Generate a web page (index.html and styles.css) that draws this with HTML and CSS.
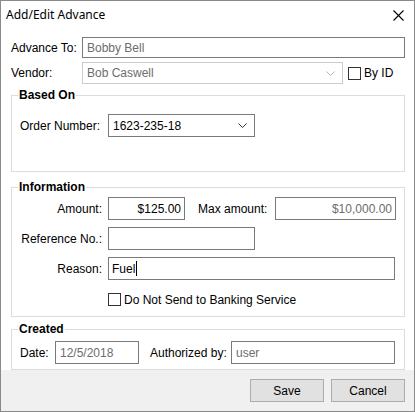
FILE: index.html
```html
<!DOCTYPE html>
<html>
<head>
<meta charset="utf-8">
<link rel="stylesheet" href="styles.css">
</head>
<body>
<div class="window">
  <div class="titlebar">
    <span class="title">Add/Edit Advance</span>
    <svg class="close" width="11" height="11" viewBox="0 0 11 11"><path d="M0.5 0.5 L10.5 10.5 M10.5 0.5 L0.5 10.5" stroke="#000" stroke-width="1.1" fill="none"/></svg>
  </div>
  <div class="content">
    <div class="row r-advance">
      <span class="lbl w71">Advance To:</span>
      <div class="box tb readonly grow">Bobby Bell</div>
    </div>
    <div class="row r-vendor">
      <span class="lbl w71">Vendor:</span>
      <div class="box combo disabled w-vendor">
        <span>Bob Caswell</span>
        <svg class="chev" width="9" height="5" viewBox="0 0 9 5"><path d="M0.5 0.5 L4.5 4.5 L8.5 0.5" stroke="#b5b5b5" fill="none"/></svg>
      </div>
      <span class="chk"></span><span class="chk-lbl">By ID</span>
    </div>

    <fieldset class="group g-based">
      <legend>Based On</legend>
      <div class="row r-order">
        <span class="lbl lcol">Order Number:</span>
        <div class="box combo w-order">
          <span>1623-235-18</span>
          <svg class="chev" width="9" height="5" viewBox="0 0 9 5"><path d="M0.5 0.5 L4.5 4.5 L8.5 0.5" stroke="#333" fill="none"/></svg>
        </div>
      </div>
    </fieldset>

    <fieldset class="group g-info">
      <legend>Information</legend>
      <div class="row r-amount">
        <span class="lbl lcol right">Amount:</span>
        <div class="box tb num w-amount">$125.00</div>
        <span class="lbl maxlbl">Max amount:</span>
        <div class="box tb num readonly w-max">$10,000.00</div>
      </div>
      <div class="row r-ref">
        <span class="lbl lcol right">Reference No.:</span>
        <div class="box tb w-ref"></div>
      </div>
      <div class="row r-reason">
        <span class="lbl lcol right">Reason:</span>
        <div class="box tb w-reason">Fuel<span class="caret"></span></div>
      </div>
      <div class="row r-bank">
        <span class="lcol"></span>
        <span class="chk"></span><span class="chk-lbl">Do Not Send to Banking Service</span>
      </div>
    </fieldset>

    <fieldset class="group g-created">
      <legend>Created</legend>
      <div class="row r-date">
        <span class="lbl w-datelbl">Date:</span>
        <div class="box tb readonly w-date">12/5/2018</div>
        <span class="lbl authlbl">Authorized by:</span>
        <div class="box tb readonly w-auth">user</div>
      </div>
    </fieldset>
  </div>
  <div class="footer">
    <button class="btn">Save</button>
    <button class="btn">Cancel</button>
  </div>
</div>
</body>
</html>
```

FILE: styles.css
```css
* { box-sizing: border-box; }
html, body { margin: 0; padding: 0; background: #fff; }
body {
  font-family: "Liberation Sans", Arial, sans-serif;
  font-size: 12px;
  color: #000;
}
.window {
  width: 415px;
  height: 412px;
  border: 1px solid #8a8a8a;
  background: #fff;
  display: flex;
  flex-direction: column;
}
.titlebar {
  height: 29px;
  display: flex;
  align-items: center;
  justify-content: space-between;
  padding: 0 10px 2px 5px;
  flex: none;
}
.title {
  font-family: "Noto Sans", "Open Sans", sans-serif;
  font-size: 12px;
}
.close { margin-right: 0; margin-top: 2px; }
.content {
  flex: 1;
  padding: 7px 9px 0 10px;
}
.row {
  display: flex;
  align-items: center;
}
.lbl { white-space: nowrap; }
.w71 { width: 71px; flex: none; }
.box {
  border: 1px solid #7a7a7a;
  background: #fff;
  display: flex;
  align-items: center;
  padding: 0 4px;
  white-space: nowrap;
  flex: none;
}
.tb { height: 21px; }
.grow { flex: 1; }
.readonly { color: #6d6d6d; }
.disabled { border-color: #cccccc; color: #6d6d6d; }
.num { justify-content: flex-end; padding-right: 3px; }
.combo { height: 22px; justify-content: space-between; padding-right: 7px; }
.chev { flex: none; }
.r-advance { height: 21px; }
.r-vendor { margin-top: 4px; height: 22px; }
.w-vendor { width: 261px; }
.chk {
  width: 13px;
  height: 13px;
  border: 1px solid #333;
  background: #fff;
  flex: none;
  margin-left: 5px;
}
.chk-lbl { margin-left: 3px; }
.r-bank .chk { margin-left: 0; }

.group {
  margin: 0;
  border: 1px solid #dcdcdc;
  padding: 0 8px;
  min-width: 0;
}
.group legend {
  font-weight: bold;
  padding: 0 1px;
  margin-left: -2px;
  line-height: 14px;
}
.g-based { margin-top: 4px; padding-top: 12px; padding-bottom: 34px; }
.lcol { width: 82px; flex: none; }
.right { text-align: right; padding-right: 0; }
.w-order { width: 147px; height: 23px; margin-left: 6px; }
.r-order .lcol { width: 82px; }
.g-info { margin-top: 8px; padding-top: 3px; padding-bottom: 10px; }
.r-amount .box, .r-ref .box, .r-reason .box { height: 23px; }
.r-amount .lcol, .r-ref .lcol, .r-reason .lcol { width: 82px; }
.w-amount { width: 77px; margin-left: 6px; }
.maxlbl { margin-left: 13px; width: 77px; }
.w-max { width: 121px; }
.r-ref { margin-top: 7px; }
.w-ref { width: 147px; margin-left: 6px; }
.r-reason { margin-top: 7px; }
.w-reason { width: 287px; margin-left: 6px; padding-left: 3px; }
.caret { display: inline-block; width: 1px; height: 15px; background: #000; margin-left: 1px; }
.r-bank { margin-top: 13px; height: 13px; }
.r-bank .lcol { width: 88px; }
.g-created { margin-top: 5px; padding-top: 5px; padding-bottom: 5px; }
.w-datelbl { width: 35px; }
.w-date { width: 84px; height: 23px; }
.authlbl { margin-left: 11px; width: 81px; }
.w-auth { width: 164px; height: 23px; }
.footer {
  flex: none;
  height: 41px;
  background: #f0f0f0;
  display: flex;
  justify-content: flex-end;
  align-items: flex-start;
  gap: 7px;
  padding: 9px 9px 0 0;
}
.btn {
  width: 74px;
  height: 23px;
  background: #e1e1e1;
  border: 1px solid #adadad;
  font-family: "Liberation Sans", Arial, sans-serif;
  font-size: 12px;
  color: #000;
  padding: 0;
  margin: 0;
}
```
